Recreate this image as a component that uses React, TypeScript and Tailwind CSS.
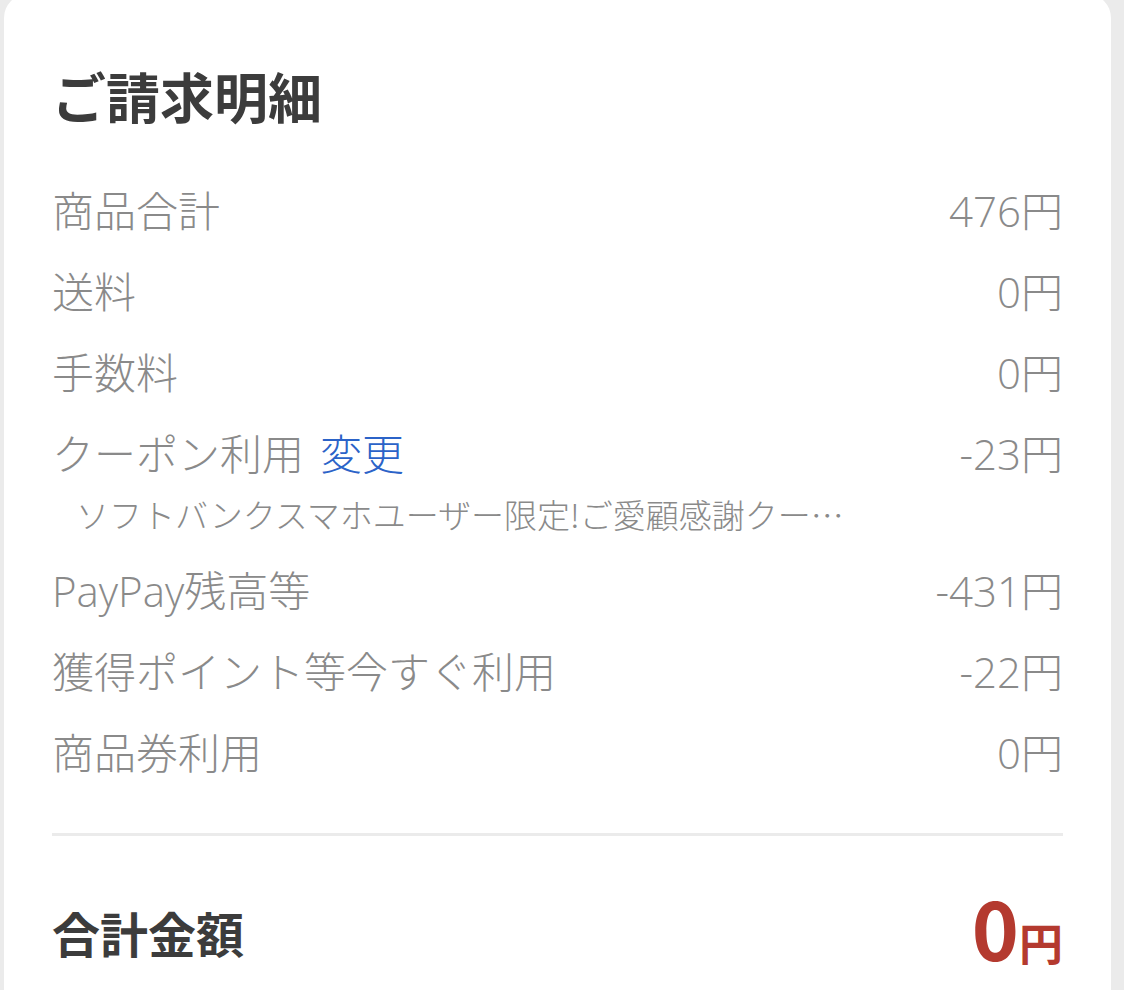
import React from 'react';

type Row = {
  label: string;
  value: string;
  action?: string;
  note?: string;
};

const rows: Row[] = [
  { label: '商品合計', value: '476円' },
  { label: '送料', value: '0円' },
  { label: '手数料', value: '0円' },
  {
    label: 'クーポン利用',
    value: '-23円',
    action: '変更',
    note: 'ソフトバンクスマホユーザー限定!ご愛顧感謝クー…',
  },
  { label: 'PayPay残高等', value: '-431円' },
  { label: '獲得ポイント等今すぐ利用', value: '-22円' },
  { label: '商品券利用', value: '0円' },
];

export default function App() {
  return (
    <div
      className="min-h-[990px] bg-[#ebebeb] pl-[4px] pr-[13px] overflow-hidden"
      style={{ fontFamily: '"Noto Sans CJK JP", "Noto Sans", sans-serif' }}
    >
      <div className="-mt-[6px] min-h-[996px] rounded-t-[24px] bg-white px-[48px] pt-[70px]">
        {/* 見出し */}
        <h2 className="text-[54px] font-bold leading-[64px] text-[#3c3c3c]">ご請求明細</h2>

        <div className="mt-[42px]">
          {rows.map((row) => (
            <div key={row.label}>
              <div
                className="flex h-[81px] items-center justify-between text-[42px] font-light text-[#8a8a8a]"
                style={{ fontFamily: '"Open Sans", "Noto Sans CJK JP", sans-serif' }}
              >
                <span>
                  {row.label}
                  {row.action && (
                    <button className="ml-[16px] text-[#2b63c8]">{row.action}</button>
                  )}
                </span>
                <span>{row.value}</span>
              </div>
              {row.note && (
                <p className="mb-[16px] pl-[24px] text-[33px] font-light leading-[40px] text-[#8a8a8a]">
                  {row.note}
                </p>
              )}
            </div>
          ))}
        </div>

        <div className="mt-[40px] h-[3px] bg-[#ebebeb]" />

        {/* 合計 */}
        <div className="mt-[45px] flex items-end justify-between">
          <span className="mb-[10px] text-[48px] font-bold leading-[64px] text-[#3c3c3c]">合計金額</span>
          <span className="font-bold text-[#b43a2f]">
            <span className="text-[80px] leading-[90px]">0</span>
            <span className="text-[44px] leading-[64px]">円</span>
          </span>
        </div>
      </div>
    </div>
  );
}
